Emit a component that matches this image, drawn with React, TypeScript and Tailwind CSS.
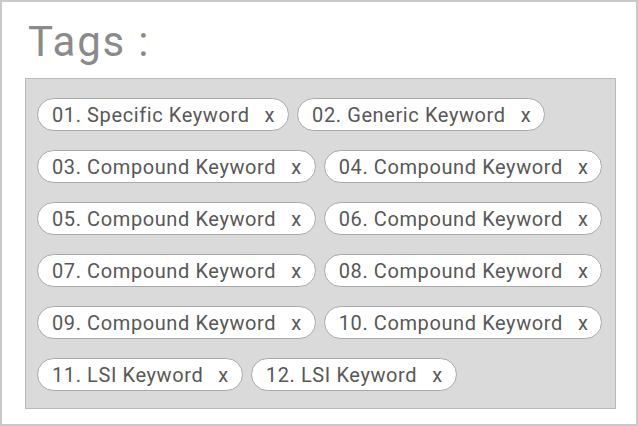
import React from "react";

const tags = [
  "01. Specific Keyword",
  "02. Generic Keyword",
  "03. Compound Keyword",
  "04. Compound Keyword",
  "05. Compound Keyword",
  "06. Compound Keyword",
  "07. Compound Keyword",
  "08. Compound Keyword",
  "09. Compound Keyword",
  "10. Compound Keyword",
  "11. LSI Keyword",
  "12. LSI Keyword",
];

export default function App() {
  return (
    <div
      className="w-[638px] h-[426px] bg-white border-2 border-[#c9c9c9] pl-[23px] pt-[14px]"
      style={{ fontFamily: "Roboto, 'Liberation Sans', sans-serif" }}
    >
      <div className="text-[42px] leading-[52px] text-[#8a8a8a] pl-[3px] tracking-[1.8px]">Tags :</div>
      <div className="mt-[10px] w-[591px] h-[331px] bg-[#dadada] border border-[#b9b9b9] pl-[11px] pr-[8px] pt-[19px]">
        <div className="flex flex-wrap gap-x-[8px] gap-y-[19px]">
          {tags.map((t) => (
            <div
              key={t}
              className="h-[33px] flex items-center rounded-full bg-white border border-[#a8a8a8] pl-[14px] pr-[13px] text-[20px] text-[#585858] tracking-[0.6px]"
            >
              <span>{t}</span>
              <span className="ml-[15px]">x</span>
            </div>
          ))}
        </div>
      </div>
    </div>
  );
}
